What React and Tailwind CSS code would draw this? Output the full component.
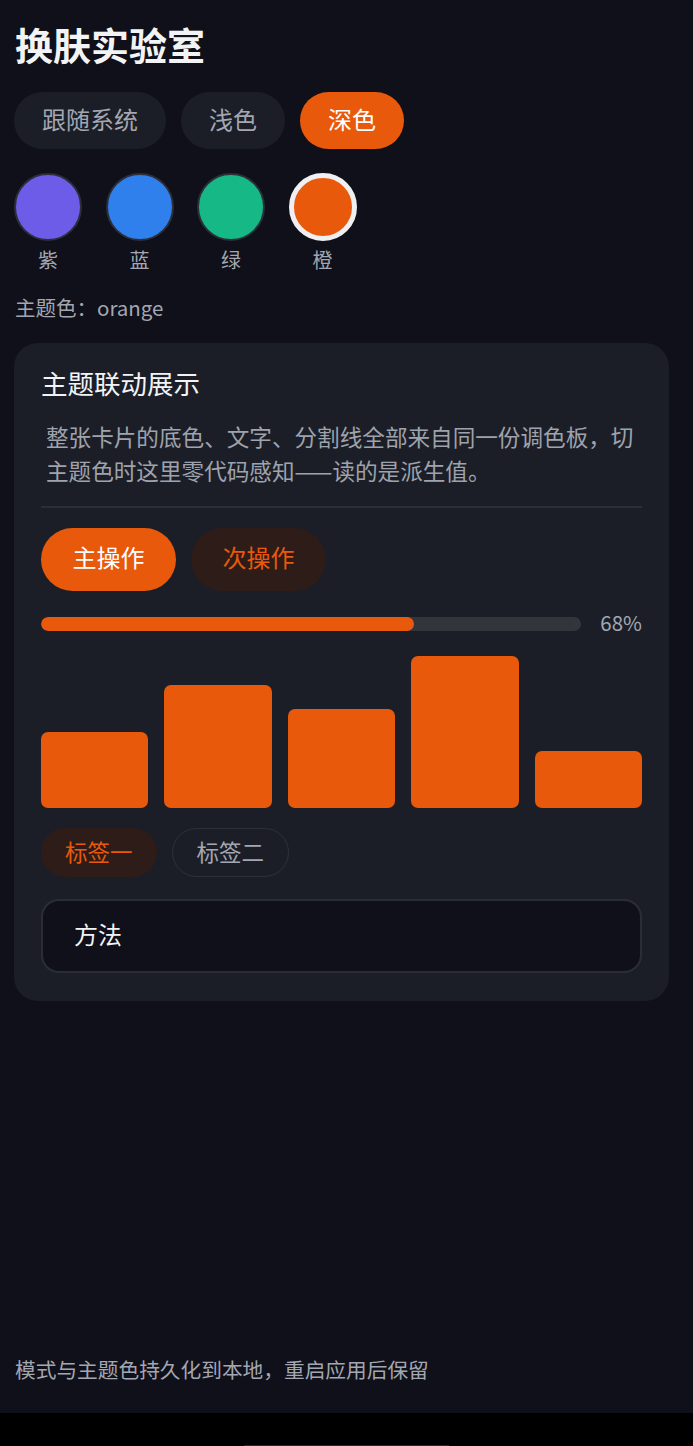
import { useState } from "react";

const ACCENT = "#e8590c";

const MODES = ["跟随系统", "浅色", "深色"];

const SWATCHES = [
  { key: "purple", label: "紫", color: "#6c5ce7" },
  { key: "blue", label: "蓝", color: "#2f80ed" },
  { key: "green", label: "绿", color: "#16b886" },
  { key: "orange", label: "橙", color: "#e8590c" },
];

const BARS = [76, 123, 99, 152, 57];

export default function App() {
  const [mode, setMode] = useState("深色");
  const [theme, setTheme] = useState("orange");
  const [text, setText] = useState("方法");

  return (
    <div
      className="w-full bg-black"
      style={{ fontFamily: '"Noto Sans CJK SC", "Noto Sans", sans-serif' }}
    >
      <div className="min-h-[1413px] bg-[#0f1019] pl-[15px] pr-[24px] pt-[20px] flex flex-col">
        <h1 className="text-[38px] leading-[48px] font-bold text-[#f2f3f5]">
          换肤实验室
        </h1>

        <div className="mt-[24px] flex gap-[15px] -ml-px">
          {MODES.map((m) => (
            <button
              key={m}
              onClick={() => setMode(m)}
              className={`h-[57px] px-[28px] pb-[3px] rounded-full text-[24px] leading-none ${
                mode === m
                  ? "bg-[#e8590c] text-white"
                  : "bg-[#1c1e27] text-[#a3a7b1]"
              }`}
            >
              {m}
            </button>
          ))}
        </div>

        <div className="mt-[24px] flex gap-[23.5px] -ml-px">
          {SWATCHES.map((s) => (
            <button
              key={s.key}
              onClick={() => setTheme(s.key)}
              className="flex flex-col items-center w-[68px]"
            >
              <span
                className={`block w-[68px] h-[68px] rounded-full ${
                  theme === s.key
                    ? "border-[5px] border-[#f0f0f3]"
                    : "border-2 border-[#2c2f3a]"
                }`}
                style={{ backgroundColor: s.color }}
              />
              <span className="mt-[5px] text-[20px] leading-[28px] text-[#a3a7b1]">
                {s.label}
              </span>
            </button>
          ))}
        </div>

        <p className="mt-[19px] text-[20.5px] leading-[28px] text-[#a3a7b1]">
          主题色：{theme}
        </p>

        <div className="mt-[22px] -ml-px rounded-[24px] bg-[#1c1e27] px-[27px] pt-[22px] pb-[28px]">
          <h2 className="text-[26.5px] leading-[36px] text-[#f2f3f5]">
            主题联动展示
          </h2>
          <p className="mt-[19px] pl-[5px] text-[22.6px] leading-[34px] text-[#9ea3ad]">
            整张卡片的底色、文字、分割线全部来自同一份调色板，切主题色时这里零代码感知——读的是派生值。
          </p>
          <div className="mt-[18px] h-[2px] bg-[#2b2e38]" />

          <div className="mt-[20px] flex gap-[15px]">
            <button className="h-[63px] w-[135px] pb-[5px] rounded-full bg-[#e8590c] text-white text-[24px] leading-none">
              主操作
            </button>
            <button className="h-[63px] w-[135px] pb-[5px] rounded-full bg-[#2e1c18] text-[#e8590c] text-[24px] leading-none">
              次操作
            </button>
          </div>

          <div className="mt-[21px] flex items-center gap-[19px] h-[24px]">
            <div className="flex-1 h-[14px] rounded-full bg-[#33353d] overflow-hidden">
              <div
                className="h-full rounded-full"
                style={{ width: "69%", backgroundColor: ACCENT }}
              />
            </div>
            <span className="text-[20.5px] leading-[24px] pb-[5px] text-[#a3a7b1]">68%</span>
          </div>

          <div className="mt-[20px] h-[152px] flex items-end gap-4">
            {BARS.map((h, i) => (
              <div
                key={i}
                className="flex-1 rounded-[7px] bg-[#e8590c]"
                style={{ height: h }}
              />
            ))}
          </div>

          <div className="mt-[20px] flex gap-[15px]">
            <span className="h-[49px] px-[24px] pb-[3px] rounded-full bg-[#2e1c18] text-[#e8590c] text-[22.5px] leading-none flex items-center">
              标签一
            </span>
            <span className="h-[49px] px-[24px] pb-[3px] rounded-full border border-[#2e313c] text-[#a3a7b1] text-[22.5px] leading-none flex items-center">
              标签二
            </span>
          </div>

          <input
            value={text}
            onChange={(e) => setText(e.target.value)}
            className="mt-[22px] w-full h-[74px] rounded-[18px] border-2 border-[#2a2d38] bg-[#0f1019] px-[31px] pb-[6px] text-[24px] text-[#f2f3f5] outline-none"
          />
        </div>

        <p className="mt-auto pb-[30px] text-[20.7px] leading-[28px] text-[#a3a7b1]">
          模式与主题色持久化到本地，重启应用后保留
        </p>
      </div>
      <div className="h-[33px] bg-black flex items-end justify-center">
        <div className="w-[205px] h-px bg-[#2a2a2a]" />
      </div>
    </div>
  );
}
